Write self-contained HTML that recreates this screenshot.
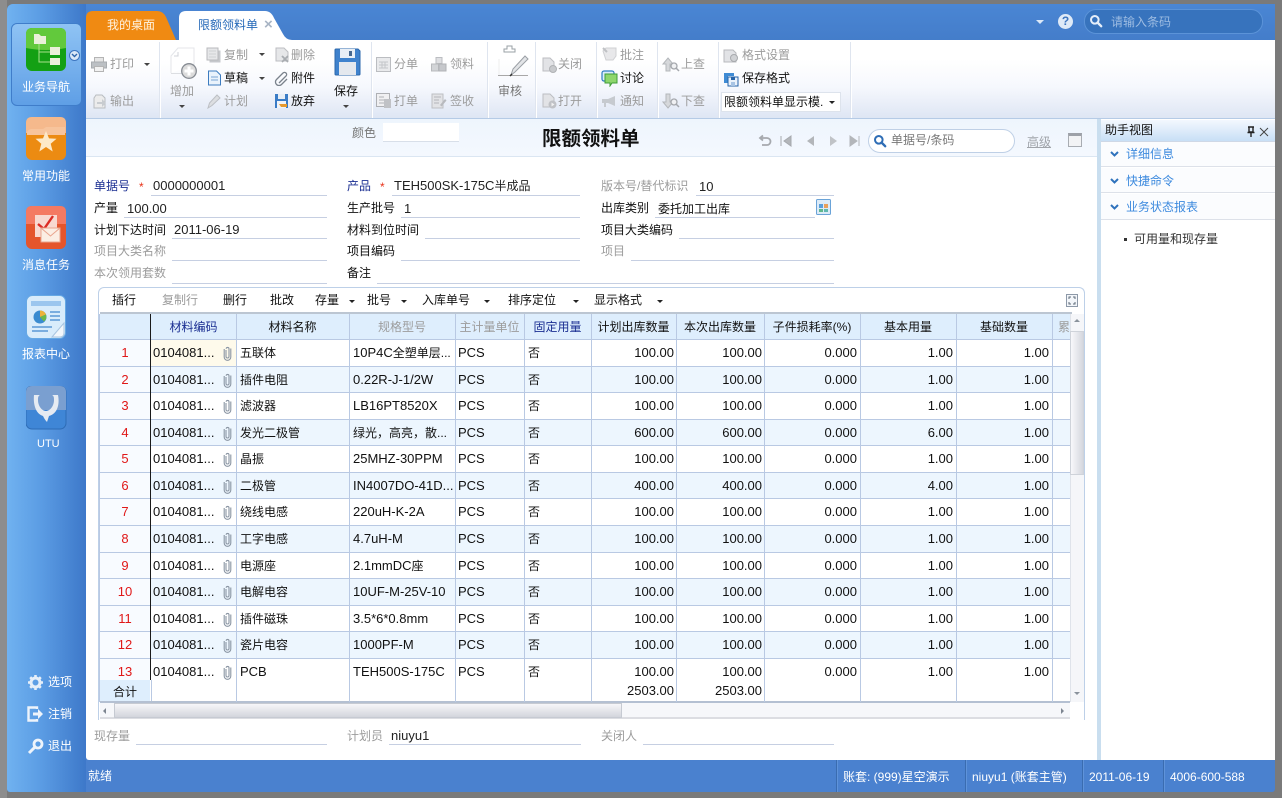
<!DOCTYPE html>
<html lang="zh-CN"><head><meta charset="utf-8"><title>限额领料单</title>
<style>
html,body{margin:0;padding:0;background:#fff}
body{width:1282px;height:799px;overflow:hidden;position:relative;font:12px/14px "Liberation Sans","WenQuanYi Zen Hei","Noto Sans CJK SC",sans-serif;color:#222}
div,span,svg,a{position:absolute}
.t{white-space:nowrap;margin-top:1px}
.n{font-size:13px}
span.i{position:static;font-size:13px}
.g{color:#9c9c9c}.w{color:#fff}.b{color:#1b2f92}.k{color:#111}
.sep{width:1px;top:42px;height:76px;background:#dfe5ef;box-shadow:1px 0 #fff}
.ar{width:0;height:0;border-left:3px solid transparent;border-right:3px solid transparent;border-top:3px solid #444}
.ln{height:1px;background:#c6cfe2}
.v{width:1px;top:314px;height:388px;background:#b9c9e3}
.h{top:314px;height:26px;line-height:27px;text-align:center;white-space:nowrap;overflow:hidden}
.r{left:100px;width:970px;border-top:1px solid #b9c9e3;height:26px;line-height:26px;color:#111}
.r.e{background:#edf6fe}
.r span{white-space:nowrap;top:0}
.r .s{left:0;width:50px;text-align:center;color:#e01818;font-size:13px;background:#f8fbff;height:100%}
.r .c{left:53px;font-size:13px}.r .e1{left:140px}.r .f{left:253px}.r .u{left:358px}.r .x{left:428px}
.r .q1,.r .q2,.r .q3,.r .q4,.r .q5{text-align:right;font-size:13px;width:90px}
.r .q1{left:484px}.r .q2{left:572px}.r .q3{left:667px}.r .q4{left:763px}.r .q5{left:859px}
.r svg{left:123px;top:5px}
</style></head><body>
<svg width="0" height="0" style="position:absolute"><defs>
<symbol id="clip" viewBox="0 0 9 16"><path d="M3 5v6.500a1.500 1.500 0 0 0 3 0V3.800a1.400 1.400 0 0 0-2.800 0M1.200 4v8a3.300 3.300 0 0 0 6.600 0V3.500" fill="none" stroke="#8a95a3" stroke-width="1.100"/></symbol>
<symbol id="doc" viewBox="0 0 16 16"><path d="M2 2h8l4 4v8H2z" fill="#e3e5e8" stroke="#b4b8bd"/><path d="M4 6h6M4 9h8M4 12h8" stroke="#c0c4c9"/></symbol>
<symbol id="mag" viewBox="0 0 14 14"><circle cx="5.800" cy="5.800" r="3.800" fill="none" stroke="#2e6db5" stroke-width="2"/><path d="M8.600 8.600l3.600 3.600" stroke="#2e6db5" stroke-width="2.400" stroke-linecap="round"/></symbol>
</defs></svg>

<!-- window frame -->
<div style="left:0;top:0;width:1282px;height:798px;background:#7a7a7a"></div>
<div style="left:0;top:0;width:7px;height:798px;background:#8d8d8d"></div>
<div style="left:7px;top:4px;width:1268px;height:788px;background:#4a81cf;border-radius:6px 6px 3px 3px"></div>
<div style="left:7px;top:4px;width:79px;height:788px;background:linear-gradient(90deg,#70b2f0,#5a9be3 45%,#3d78c9);border-radius:6px 0 0 3px"></div>
<div style="left:86px;top:4px;width:1189px;height:36px;background:linear-gradient(#4a86d4,#447dca)"></div>

<!-- tabs -->
<svg style="left:86px;top:11px" width="206" height="30"><path d="M0 29V7Q0 0 7 0h64q6 0 9 6l10 23z" fill="#f08a12"/><path d="M93 29V7q0-7 7-7h79q6 0 9 7l9 16q3 6 9 6z" fill="#fff"/></svg>
<div class="t" style="left:107px;top:17px;color:#fff3df">我的桌面</div>
<div class="t" style="left:198px;top:17px;color:#2468b8">限额领料单</div>
<div class="t" style="left:264px;top:17px;color:#a8b4c4;font-weight:bold;font-size:15px">×</div>

<!-- top right -->
<div class="ar" style="left:1036px;top:20px;border-left-width:4px;border-right-width:4px;border-top:4px solid #dce9f8"></div>
<div style="left:1058px;top:14px;width:15px;height:15px;border-radius:50%;background:#dfeaf7;color:#3d75bf;font-weight:bold;text-align:center;line-height:15px;font-size:12px">?</div>
<div style="left:1084px;top:9px;width:177px;height:23px;border-radius:12px;background:#3773bd;border:1px solid #5b93d8"></div>
<svg style="left:1089px;top:14px" width="14" height="14" viewBox="0 0 14 14"><circle cx="5.800" cy="5.800" r="3.800" fill="none" stroke="#e5eef9" stroke-width="2"/><path d="M8.600 8.600l3.600 3.600" stroke="#e5eef9" stroke-width="2.400" stroke-linecap="round"/></svg>
<div class="t" style="left:1111px;top:14px;color:#9dbce2">请输入条码</div>

<!-- sidebar -->
<div style="left:11px;top:23px;width:69px;height:81px;border-radius:6px;background:linear-gradient(#8fc3f4,#5f9fe6);border:1px solid #3f7dca"></div>
<svg style="left:26px;top:28px" width="41" height="43" viewBox="0 0 41 43"><rect width="40" height="43" rx="6" fill="#14a014"/><path d="M0 6q0-6 6-6h28q6 0 6 6v14q-20 4-40 0z" fill="#62c93c"/><path d="M13 16v18h11M13 24h11" fill="none" stroke="#a9e08c"/><path d="M8 6h5l2 2h5v8H8zM24 19h10v8H24zM24 30h10v7H24z" fill="#eaf0da"/></svg>
<div style="left:69px;top:50px;width:11px;height:11px;border-radius:50%;background:#dbe8f7;border:1px solid #3d75bf;box-sizing:border-box"></div>
<svg style="left:71px;top:53px" width="7" height="5"><path d="M1 1l2.500 2.500L6 1" fill="none" stroke="#2e65ab" stroke-width="1.400"/></svg>
<div class="t w" style="left:22px;top:79px">业务导航</div>

<svg style="left:26px;top:117px" width="41" height="43" viewBox="0 0 41 43"><rect width="40" height="43" rx="6" fill="#ec8b12"/><path d="M0 16V6q0-6 6-6h28q6 0 6 6v10z" fill="#f5b98c"/><path d="M1 16q0-3 4-4h12l3-2h19v8H1z" fill="#f7c49c"/><path d="M20 14l3 7.400 7.500.4-5.800 5 2 7.700L20 30l-6.700 4.500 2-7.700-5.800-5 7.500-.4z" fill="#fde9c8"/></svg>
<div class="t w" style="left:22px;top:168px">常用功能</div>
<svg style="left:26px;top:206px" width="41" height="43" viewBox="0 0 41 43"><rect width="40" height="43" rx="6" fill="#e4552c"/><path d="M0 6q0-6 6-6h28q6 0 6 6v12H0z" fill="#f47a62"/><rect x="9" y="9" width="22" height="22" fill="#f8d9d0"/><path d="M12 18l6 5 9-13" fill="none" stroke="#dc2c24" stroke-width="2.400"/><rect x="15" y="22" width="19" height="14" fill="#fbeee4" stroke="#e9a58e"/><path d="M15 22l9.500 8 9.500-8" fill="none" stroke="#e9a58e"/></svg>
<div class="t w" style="left:22px;top:257px">消息任务</div>
<svg style="left:26px;top:295px" width="41" height="44" viewBox="0 0 41 44"><rect x=".5" y=".5" width="39" height="43" rx="6" fill="#d9ecfb" stroke="#67a9e4"/><rect x="5" y="6" width="30" height="5" fill="#9cc6ee"/><circle cx="14" cy="22" r="6.500" fill="#3a8bd0"/><path d="M14 22V15.500a6.500 6.500 0 0 1 6 4z" fill="#ecb23a"/><path d="M14 22l6-2.500a6.500 6.500 0 0 1-2 7z" fill="#6cb84a"/><path d="M24 17h10M24 21h10M24 25h10M6 32h20M6 36h16" stroke="#5a98d6" stroke-width="1.500"/><path d="M26 42l12-14v10q0 4-4 4z" fill="#f3f7fb" stroke="#a9c5e0"/></svg>
<div class="t w" style="left:22px;top:346px">报表中心</div>
<svg style="left:26px;top:386px" width="41" height="44" viewBox="0 0 41 44"><rect width="40" height="43" rx="6" fill="#3f86d6" stroke="#2e6cb5"/><path d="M0 6q0-6 6-6h28q6 0 6 6v18H0z" fill="#7a9fd0"/><path d="M8 9h6c-2 1-2 3-2 5 0 6 4 11 8 11s8-5 8-11c0-2 0-4-2-5h6c2 10-1 19-9 21l-2 6c-2-2-3-4-4-6-7-2-10-11-9-21z" fill="#e6ebf2"/></svg>
<div class="t w" style="left:37px;top:436px;font-size:11px">UTU</div>

<svg style="left:27px;top:674px" width="17" height="17" viewBox="0 0 17 17"><circle cx="8.500" cy="8.500" r="4.500" fill="none" stroke="#e6eff9" stroke-width="3"/><path d="M8.500 1v3M8.500 13v3M1 8.500h3M13 8.500h3M3.200 3.200l2 2M11.800 11.800l2 2M13.800 3.200l-2 2M5.200 11.800l-2 2" stroke="#e6eff9" stroke-width="2.600"/></svg>
<div class="t w" style="left:48px;top:674px">选项</div>
<svg style="left:27px;top:706px" width="17" height="16" viewBox="0 0 17 16"><path d="M10 3V1.500H1.500v13H10V13" fill="none" stroke="#eef4fb" stroke-width="2.400"/><path d="M6 6.500h5V3l5 5-5 5V9.500H6z" fill="#eef4fb"/></svg>
<div class="t w" style="left:48px;top:706px">注销</div>
<svg style="left:27px;top:738px" width="17" height="17" viewBox="0 0 17 17"><circle cx="11" cy="6" r="4" fill="none" stroke="#eef4fb" stroke-width="2.800"/><path d="M8 9l-6 6" stroke="#eef4fb" stroke-width="3"/></svg>
<div class="t w" style="left:48px;top:738px">退出</div>

<!-- main surface -->
<div style="left:86px;top:40px;width:1189px;height:720px;background:#fff;border-radius:0 0 0 3px"></div>
<div style="left:86px;top:40px;width:1189px;height:79px;background:linear-gradient(#fff 25%,#f6f8fd 60%,#dee6f4);border-bottom:1px solid #b5cbe6;box-sizing:border-box"></div>
<div style="left:86px;top:119px;width:1012px;height:38px;background:linear-gradient(#eef5fd,#f4f8fe);border-bottom:1px solid #dbe6f2;box-sizing:border-box"></div>

<!-- toolbar separators -->
<div class="sep" style="left:159px"></div><div class="sep" style="left:371px"></div><div class="sep" style="left:487px"></div><div class="sep" style="left:535px"></div><div class="sep" style="left:596px"></div><div class="sep" style="left:657px"></div><div class="sep" style="left:718px"></div><div class="sep" style="left:850px"></div>

<!-- toolbar -->
<svg style="left:91px;top:57px" width="16" height="15" viewBox="0 0 16 15"><rect x="3.500" y=".5" width="9" height="5" fill="#e6e6e6" stroke="#b4b4b4"/><rect x=".5" y="5" width="15" height="6" fill="#bcc0c4" stroke="#a8acb0"/><rect x="3.500" y="9.500" width="9" height="5" fill="#f2f2f2" stroke="#b4b4b4"/></svg>
<div class="t g" style="left:110px;top:56px">打印</div><div class="ar" style="left:144px;top:63px"></div>
<svg style="left:92px;top:94px" width="16" height="15" viewBox="0 0 16 15"><path d="M4 1h6l3 3v10H2V4z" fill="#ececec" stroke="#b8bcc0"/><path d="M5 8h5V5l4 4-4 4v-3H5z" fill="#c8ccd0"/></svg><div class="t g" style="left:110px;top:93px">输出</div>

<svg style="left:170px;top:47px" width="28" height="32" viewBox="0 0 28 32"><path d="M1 26V9l7-8h16v17" fill="#fff" stroke="#e4e6ea"/><path d="M1 26.500h16" stroke="#dcdee2"/><path d="M4 9h4V5" fill="none" stroke="#d0d3d8"/><circle cx="19" cy="24" r="7.300" fill="#dcdcdc" stroke="#878c93" stroke-width="1.300"/><path d="M19 19.500v9M14.500 24h9" stroke="#fff" stroke-width="3"/></svg>
<div class="t g" style="left:170px;top:83px">增加</div><div class="ar" style="left:179px;top:105px"></div>

<svg style="left:206px;top:47px" width="16" height="16" viewBox="0 0 16 16"><rect x="3.500" y="3.500" width="11" height="12" fill="#c6c8cc"/><rect x="1" y="1" width="11" height="12" fill="#e6e7e9" stroke="#b8babd"/><path d="M3 4h7M3 7h7M3 10h7" stroke="#cfd1d4"/></svg><div class="t g" style="left:224px;top:47px">复制</div><div class="ar" style="left:259px;top:53px"></div>
<svg style="left:207px;top:70px" width="15" height="16" viewBox="0 0 15 16"><path d="M1.500 1h8l4 4v10h-12z" fill="#eaf3fc" stroke="#3d7cc0"/><path d="M4 7h7M4 10h7" stroke="#7aa6d4"/></svg><div class="t k" style="left:224px;top:70px">草稿</div><div class="ar" style="left:259px;top:77px"></div>
<svg style="left:206px;top:93px" width="16" height="16" viewBox="0 0 16 16"><path d="M2 15l1.500-5L11 2l3 3-8 7.500z" fill="#dcdee1" stroke="#bcbfc4"/></svg><div class="t g" style="left:224px;top:93px">计划</div>

<svg style="left:274px;top:47px" width="16" height="16" viewBox="0 0 16 16"><path d="M2 1h8l4 4v9H2z" fill="#e6e7e9" stroke="#bcbec2"/><path d="M8 9l6 6M14 9l-6 6" stroke="#a8acb0" stroke-width="1.800"/></svg><div class="t g" style="left:291px;top:47px">删除</div>
<svg style="left:274px;top:70px" width="15" height="16" viewBox="0 0 15 16"><path d="M5 13L12 6a2 2 0 0 0-3-3L2.500 9.500a3.500 3.500 0 0 0 5 5L13 9" fill="none" stroke="#7a828c" stroke-width="1.300"/></svg><div class="t k" style="left:291px;top:70px">附件</div>
<svg style="left:274px;top:93px" width="15" height="16" viewBox="0 0 15 16"><rect x="1" y="1" width="13" height="14" fill="#3a7cc6"/><rect x="4" y="1" width="7" height="5" fill="#e7eef6"/><rect x="3" y="8" width="9" height="7" fill="#f1f4f8"/><path d="M5 11h8v3H7z" fill="#e79a2e"/></svg><div class="t k" style="left:291px;top:93px">放弃</div>

<svg style="left:334px;top:48px" width="27" height="28" viewBox="0 0 27 28"><path d="M1 2q0-1 1-1h22l2 2v23q0 1-1 1H2q-1 0-1-1z" fill="#3f82cd" stroke="#2d68ac"/><rect x="6" y="1" width="15" height="9" fill="#e9eff6"/><rect x="15" y="3" width="3" height="5" fill="#47688f"/><rect x="5" y="14" width="17" height="13" fill="#e4e8ee"/></svg>
<div class="t k" style="left:334px;top:83px">保存</div><div class="ar" style="left:343px;top:105px"></div>

<svg style="left:376px;top:57px" width="15" height="15" viewBox="0 0 15 15"><rect x=".5" y=".5" width="14" height="14" fill="#e9eaec" stroke="#bbbdc1"/><path d="M3 5h9M3 8h9M3 11h9M6 5v6M9 5v6" stroke="#c4c6ca"/></svg><div class="t g" style="left:394px;top:56px">分单</div>
<svg style="left:376px;top:93px" width="16" height="16" viewBox="0 0 16 16"><rect x=".5" y=".5" width="13" height="13" fill="#f0f0f2" stroke="#aeb0b4"/><path d="M3 4h5M3 7h5M3 10h5" stroke="#b0b2b6"/><rect x="8" y="6" width="7" height="9" fill="#c0c2c6"/></svg><div class="t g" style="left:394px;top:93px">打单</div>
<svg style="left:431px;top:57px" width="16" height="15" viewBox="0 0 16 15"><rect x="5" y=".5" width="6" height="6" fill="#dfe0e3" stroke="#bbbdc1"/><rect x=".5" y="7" width="7" height="7" fill="#d2d4d7" stroke="#b8babd"/><rect x="8" y="7" width="7" height="7" fill="#c6c8cc" stroke="#b0b2b6"/></svg><div class="t g" style="left:450px;top:56px">领料</div>
<svg style="left:431px;top:93px" width="16" height="16" viewBox="0 0 16 16"><rect x="1" y="1" width="11" height="14" fill="#e2e3e6" stroke="#bdbfc3"/><path d="M3 4h7M3 7h5M3 10h5" stroke="#b4b6ba"/><path d="M9 12l5-6 1.500 1.500-5 6z" fill="#b8babe"/></svg><div class="t g" style="left:450px;top:93px">签收</div>

<svg style="left:498px;top:44px" width="33" height="35" viewBox="0 0 33 35"><path d="M6 8V5h3V2h5v3h3v3z" fill="none" stroke="#9aa0a6"/><path d="M0 31.500h30" stroke="#a8a8a8"/><path d="M1 31V15" stroke="#eee"/><path d="M13 31l2-6 12-13 3 3-13 13z" fill="#e2e4e7" stroke="#9a9fa5"/><path d="M12 32l2-2" stroke="#333" stroke-width="1.500"/></svg>
<div class="t" style="left:498px;top:83px;color:#777">审核</div>

<svg style="left:541px;top:57px" width="16" height="16" viewBox="0 0 16 16"><path d="M2 1h7l4 4v9H2z" fill="#e2e3e6" stroke="#bcbec2"/><circle cx="12" cy="12" r="3.500" fill="#c8cacd" stroke="#b0b2b5"/></svg><div class="t g" style="left:558px;top:56px">关闭</div>
<svg style="left:541px;top:93px" width="16" height="16" viewBox="0 0 16 16"><path d="M2 1h7l4 4v9H2z" fill="#e2e3e6" stroke="#bcbec2"/><circle cx="11.500" cy="11.500" r="4" fill="#c0c2c6"/><path d="M10.500 9.500l3 2-3 2z" fill="#f2f2f2"/></svg><div class="t g" style="left:558px;top:93px">打开</div>

<svg style="left:602px;top:47px" width="15" height="15" viewBox="0 0 15 15"><path d="M1 4l3-3h10v8l-3 4H4z" fill="#e8e8ea" stroke="#cfd0d3"/><path d="M1 1l4 4" stroke="#bfc1c4" stroke-width="2"/></svg><div class="t g" style="left:620px;top:47px">批注</div>
<svg style="left:601px;top:70px" width="17" height="17" viewBox="0 0 17 17"><rect x="1" y="1" width="12" height="10" rx="2" fill="#d9ecfa" stroke="#2f7cc0" stroke-width="1.200"/><path d="M4 4h12v9h-5l-2 3v-3H4z" fill="#8ed66c" stroke="#3f9c38"/></svg><div class="t k" style="left:620px;top:70px">讨论</div>
<svg style="left:601px;top:94px" width="16" height="15" viewBox="0 0 16 15"><path d="M1 5h6l7-3v10L7 9H5v4H3V9H1z" fill="#c6cacf"/></svg><div class="t g" style="left:620px;top:93px">通知</div>

<svg style="left:662px;top:57px" width="18" height="16" viewBox="0 0 18 16"><path d="M6 1l5 6H8v7H4V7H1z" fill="#d6d8db" stroke="#b4b7bb"/><circle cx="12" cy="9" r="3" fill="#f0f1f3" stroke="#a4a7ac" stroke-width="1.300"/><path d="M14 11l3 3" stroke="#a4a7ac" stroke-width="1.500"/></svg><div class="t g" style="left:681px;top:56px">上查</div>
<svg style="left:662px;top:93px" width="18" height="16" viewBox="0 0 18 16"><path d="M6 15l5-6H8V1H4v8H1z" fill="#d6d8db" stroke="#b4b7bb"/><circle cx="12" cy="9" r="3" fill="#f0f1f3" stroke="#a4a7ac" stroke-width="1.300"/><path d="M14 11l3 3" stroke="#a4a7ac" stroke-width="1.500"/></svg><div class="t g" style="left:681px;top:93px">下查</div>

<svg style="left:723px;top:47px" width="16" height="16" viewBox="0 0 16 16"><path d="M1 3h9l3 3v9H1z" fill="#e2e3e6" stroke="#b8babd"/><circle cx="11" cy="11" r="3.500" fill="#d0d2d5" stroke="#a8aaae"/></svg><div class="t g" style="left:742px;top:47px">格式设置</div>
<svg style="left:723px;top:70px" width="16" height="17" viewBox="0 0 16 17"><path d="M1 3h10v3H5v7H1z" fill="#3f8bd4"/><rect x="5" y="7" width="10" height="9" fill="#eaf2fb" stroke="#2563a8"/><rect x="8" y="7" width="4" height="3" fill="#2563a8"/><rect x="8" y="12" width="4" height="4" fill="#a8c4e4"/></svg><div class="t k" style="left:742px;top:70px">保存格式</div>
<div style="left:721px;top:92px;width:120px;height:20px;background:#fff;border:1px solid #dde3ec;box-sizing:border-box"></div>
<div class="t k" style="left:724px;top:94px">限额领料单显示模.</div><div class="ar" style="left:829px;top:101px;border-top-color:#222"></div>

<!-- doc header -->
<div class="t" style="left:352px;top:125px;color:#777">颜色</div>
<div style="left:383px;top:123px;width:76px;height:18px;background:#fff;border-bottom:1px solid #d8dfe9"></div>
<div class="t" style="left:542px;top:127px;font-size:19.500px;line-height:22px;font-weight:bold;color:#111">限额领料单</div>
<svg style="left:758px;top:134px" width="108" height="14" viewBox="0 0 108 14"><path d="M3 4h6a3.500 3.500 0 0 1 0 7H4M5 1.500L2 4l3 2.500" fill="none" stroke="#a6a9ae" stroke-width="1.800"/><path d="M23 2v10M33 2l-7 5 7 5z" fill="#b3b6ba" stroke="#a6a9ae"/><path d="M56 2l-7 5 7 5z" fill="#b3b6ba"/><path d="M72 2l7 5-7 5z" fill="#c0c3c7"/><path d="M92 2l7 5-7 5zM101 2v10" fill="#b3b6ba" stroke="#b3b6ba"/></svg>
<div style="left:868px;top:129px;width:145px;height:22px;border-radius:12px;background:#fff;border:1px solid #bfd0e6"></div>
<svg style="left:873px;top:134px" width="14" height="14"><use href="#mag"/></svg>
<div class="t" style="left:891px;top:132px;color:#777">单据号/条码</div>
<div class="t" style="left:1027px;top:134px;color:#a0a4aa;text-decoration:underline">高级</div>
<div style="left:1068px;top:133px;width:14px;height:14px;background:#f2f3f5;border:1px solid #a8acb2;border-top:3px solid #9da1a8;box-sizing:border-box"></div>

<!-- form -->
<div class="t b" style="left:94px;top:178px">单据号</div><div class="t" style="left:139px;top:179px;color:#e8331a">*</div><div class="t n" style="left:153px;top:178px">0000000001</div><div class="ln" style="left:151px;top:195px;width:176px"></div>
<div class="t k" style="left:94px;top:200px">产量</div><div class="t n" style="left:127px;top:201px">100.00</div><div class="ln" style="left:124px;top:217px;width:203px"></div>
<div class="t k" style="left:94px;top:222px">计划下达时间</div><div class="t n" style="left:174px;top:222px">2011-06-19</div><div class="ln" style="left:172px;top:238px;width:155px"></div>
<div class="t g" style="left:94px;top:243px">项目大类名称</div><div class="ln" style="left:172px;top:260px;width:155px"></div>
<div class="t g" style="left:94px;top:265px">本次领用套数</div><div class="ln" style="left:172px;top:283px;width:155px"></div>

<div class="t b" style="left:347px;top:178px">产品</div><div class="t" style="left:380px;top:179px;color:#e8331a">*</div><div class="t" style="left:394px;top:178px"><span class="i">TEH500SK-175C</span>半成品</div><div class="ln" style="left:392px;top:195px;width:188px"></div>
<div class="t k" style="left:347px;top:200px">生产批号</div><div class="t n" style="left:404px;top:201px">1</div><div class="ln" style="left:401px;top:217px;width:179px"></div>
<div class="t k" style="left:347px;top:222px">材料到位时间</div><div class="ln" style="left:425px;top:238px;width:155px"></div>
<div class="t k" style="left:347px;top:243px">项目编码</div><div class="ln" style="left:401px;top:260px;width:179px"></div>
<div class="t k" style="left:347px;top:265px">备注</div><div class="ln" style="left:377px;top:283px;width:457px"></div>

<div class="t g" style="left:601px;top:178px">版本号/替代标识</div><div class="t n" style="left:699px;top:179px">10</div><div class="ln" style="left:696px;top:195px;width:138px"></div>
<div class="t k" style="left:601px;top:200px">出库类别</div><div class="t k" style="left:658px;top:201px">委托加工出库</div><div class="ln" style="left:655px;top:217px;width:160px"></div>
<svg style="left:816px;top:199px" width="15" height="16" viewBox="0 0 15 16"><rect x=".5" y=".5" width="14" height="15" rx="1" fill="#dcebf8" stroke="#6aa3d8"/><rect x="3" y="5" width="4" height="4" fill="#5a9fdc"/><rect x="8" y="5" width="4" height="4" fill="#e8a05c"/><rect x="3" y="10" width="4" height="3" fill="#5fb88c"/><rect x="8" y="10" width="4" height="3" fill="#5fb8b0"/></svg>
<div class="t k" style="left:601px;top:222px">项目大类编码</div><div class="ln" style="left:679px;top:238px;width:155px"></div>
<div class="t g" style="left:601px;top:243px">项目</div><div class="ln" style="left:631px;top:260px;width:203px"></div>

<!-- grid frame -->
<div style="left:98px;top:287px;width:987px;height:433px;border:1px solid #bdd0e8;border-bottom:0;border-radius:6px 6px 0 0;box-sizing:border-box"></div>
<div style="left:100px;top:312px;width:972px;height:2px;background:#bcc6d2"></div>
<div class="t k" style="left:112px;top:292px">插行</div><div class="t g" style="left:162px;top:292px">复制行</div><div class="t k" style="left:223px;top:292px">删行</div><div class="t k" style="left:270px;top:292px">批改</div><div class="t k" style="left:315px;top:292px">存量</div><div class="ar" style="left:349px;top:300px;border-top-color:#222"></div><div class="t k" style="left:367px;top:292px">批号</div><div class="ar" style="left:401px;top:300px;border-top-color:#222"></div><div class="t k" style="left:422px;top:292px">入库单号</div><div class="ar" style="left:484px;top:300px;border-top-color:#222"></div><div class="t k" style="left:508px;top:292px">排序定位</div><div class="ar" style="left:573px;top:300px;border-top-color:#222"></div><div class="t k" style="left:594px;top:292px">显示格式</div><div class="ar" style="left:657px;top:300px;border-top-color:#222"></div>
<svg style="left:1066px;top:294px" width="12" height="13" viewBox="0 0 12 13"><rect x=".5" y=".5" width="11" height="12" fill="#f3f6fa" stroke="#8d99a8"/><path d="M3 5V3h2M7 3h2v2M9 8v2H7M5 10H3V8" fill="none" stroke="#5d6a78"/></svg>

<!-- grid header -->
<div style="left:100px;top:314px;width:970px;height:26px;background:#deeefd;border-bottom:1px solid #b9c9e3;box-sizing:border-box"></div>
<div class="h b" style="left:151px;width:85px">材料编码</div><div class="h k" style="left:236px;width:113px">材料名称</div><div class="h g" style="left:349px;width:106px">规格型号</div><div class="h g" style="left:455px;width:69px">主计量单位</div><div class="h b" style="left:524px;width:67px">固定用量</div><div class="h k" style="left:591px;width:85px">计划出库数量</div><div class="h k" style="left:676px;width:88px">本次出库数量</div><div class="h k" style="left:764px;width:96px">子件损耗率(%)</div><div class="h k" style="left:860px;width:96px">基本用量</div><div class="h k" style="left:956px;width:96px">基础数量</div><div class="h g" style="left:1052px;width:18px;text-align:left;padding-left:6px;box-sizing:border-box">累</div>

<!-- grid rows -->
<div class="r" style="top:339px"><span class="s">1</span><span style="left:51px;width:85px;height:26px;background:#fefaeb"></span><span class="c">0104081...</span><svg width="9" height="16"><use href="#clip"/></svg><span class="e1">五联体</span><span class="f"><span class="i" style="position:static">10P4C</span>全塑单层...</span><span class="u n">PCS</span><span class="x">否</span><span class="q1">100.00</span><span class="q2">100.00</span><span class="q3">0.000</span><span class="q4">1.00</span><span class="q5">1.00</span></div>
<div class="r e" style="top:366px"><span class="s">2</span><span class="c">0104081...</span><svg width="9" height="16"><use href="#clip"/></svg><span class="e1">插件电阻</span><span class="f n">0.22R-J-1/2W</span><span class="u n">PCS</span><span class="x">否</span><span class="q1">100.00</span><span class="q2">100.00</span><span class="q3">0.000</span><span class="q4">1.00</span><span class="q5">1.00</span></div>
<div class="r" style="top:392px"><span class="s">3</span><span class="c">0104081...</span><svg width="9" height="16"><use href="#clip"/></svg><span class="e1">滤波器</span><span class="f n">LB16PT8520X</span><span class="u n">PCS</span><span class="x">否</span><span class="q1">100.00</span><span class="q2">100.00</span><span class="q3">0.000</span><span class="q4">1.00</span><span class="q5">1.00</span></div>
<div class="r e" style="top:419px"><span class="s">4</span><span class="c">0104081...</span><svg width="9" height="16"><use href="#clip"/></svg><span class="e1">发光二极管</span><span class="f">绿光，高亮，散...</span><span class="u n">PCS</span><span class="x">否</span><span class="q1">600.00</span><span class="q2">600.00</span><span class="q3">0.000</span><span class="q4">6.00</span><span class="q5">1.00</span></div>
<div class="r" style="top:445px"><span class="s">5</span><span class="c">0104081...</span><svg width="9" height="16"><use href="#clip"/></svg><span class="e1">晶振</span><span class="f n">25MHZ-30PPM</span><span class="u n">PCS</span><span class="x">否</span><span class="q1">100.00</span><span class="q2">100.00</span><span class="q3">0.000</span><span class="q4">1.00</span><span class="q5">1.00</span></div>
<div class="r e" style="top:472px"><span class="s">6</span><span class="c">0104081...</span><svg width="9" height="16"><use href="#clip"/></svg><span class="e1">二极管</span><span class="f n">IN4007DO-41D...</span><span class="u n">PCS</span><span class="x">否</span><span class="q1">400.00</span><span class="q2">400.00</span><span class="q3">0.000</span><span class="q4">4.00</span><span class="q5">1.00</span></div>
<div class="r" style="top:498px"><span class="s">7</span><span class="c">0104081...</span><svg width="9" height="16"><use href="#clip"/></svg><span class="e1">绕线电感</span><span class="f n">220uH-K-2A</span><span class="u n">PCS</span><span class="x">否</span><span class="q1">100.00</span><span class="q2">100.00</span><span class="q3">0.000</span><span class="q4">1.00</span><span class="q5">1.00</span></div>
<div class="r e" style="top:525px"><span class="s">8</span><span class="c">0104081...</span><svg width="9" height="16"><use href="#clip"/></svg><span class="e1">工字电感</span><span class="f n">4.7uH-M</span><span class="u n">PCS</span><span class="x">否</span><span class="q1">100.00</span><span class="q2">100.00</span><span class="q3">0.000</span><span class="q4">1.00</span><span class="q5">1.00</span></div>
<div class="r" style="top:552px"><span class="s">9</span><span class="c">0104081...</span><svg width="9" height="16"><use href="#clip"/></svg><span class="e1">电源座</span><span class="f"><span class="i" style="position:static">2.1mmDC</span>座</span><span class="u n">PCS</span><span class="x">否</span><span class="q1">100.00</span><span class="q2">100.00</span><span class="q3">0.000</span><span class="q4">1.00</span><span class="q5">1.00</span></div>
<div class="r e" style="top:578px"><span class="s">10</span><span class="c">0104081...</span><svg width="9" height="16"><use href="#clip"/></svg><span class="e1">电解电容</span><span class="f n">10UF-M-25V-10</span><span class="u n">PCS</span><span class="x">否</span><span class="q1">100.00</span><span class="q2">100.00</span><span class="q3">0.000</span><span class="q4">1.00</span><span class="q5">1.00</span></div>
<div class="r" style="top:605px"><span class="s">11</span><span class="c">0104081...</span><svg width="9" height="16"><use href="#clip"/></svg><span class="e1">插件磁珠</span><span class="f n">3.5*6*0.8mm</span><span class="u n">PCS</span><span class="x">否</span><span class="q1">100.00</span><span class="q2">100.00</span><span class="q3">0.000</span><span class="q4">1.00</span><span class="q5">1.00</span></div>
<div class="r e" style="top:631px"><span class="s">12</span><span class="c">0104081...</span><svg width="9" height="16"><use href="#clip"/></svg><span class="e1">瓷片电容</span><span class="f n">1000PF-M</span><span class="u n">PCS</span><span class="x">否</span><span class="q1">100.00</span><span class="q2">100.00</span><span class="q3">0.000</span><span class="q4">1.00</span><span class="q5">1.00</span></div>
<div class="r" style="top:658px;height:42px;background:#fff;border-bottom:2px solid #b4c0d2"><span class="s" style="height:21px;line-height:26px;overflow:hidden">13</span><span class="c">0104081...</span><svg width="9" height="16"><use href="#clip"/></svg><span class="e1 n">PCB</span><span class="f n">TEH500S-175C</span><span class="u n">PCS</span><span class="x">否</span><span class="q1">100.00</span><span class="q2">100.00</span><span class="q3">0.000</span><span class="q4">1.00</span><span class="q5">1.00</span></div>
<div style="left:100px;top:680px;width:50px;height:21px;background:#deeefd;text-align:center;line-height:24px;color:#111">合计</div>
<div class="t n" style="left:627px;top:683px;color:#111">2503.00</div><div class="t n" style="left:715px;top:683px;color:#111">2503.00</div>

<!-- grid column lines -->
<div class="v" style="left:99px"></div><div class="v" style="left:236px"></div><div class="v" style="left:349px"></div><div class="v" style="left:455px"></div><div class="v" style="left:524px"></div><div class="v" style="left:591px"></div><div class="v" style="left:676px"></div><div class="v" style="left:764px"></div><div class="v" style="left:860px"></div><div class="v" style="left:956px"></div><div class="v" style="left:1052px"></div>
<div style="left:150px;top:314px;width:1px;height:366px;background:#1a1a1a"></div>
<div style="left:151px;top:680px;width:1px;height:21px;background:#b9c9e3"></div>

<!-- scrollbars -->
<div style="left:1070px;top:314px;width:14px;height:388px;background:#f5f6f9;border-left:1px solid #dfe3ea;box-sizing:border-box"></div>
<div style="left:1070px;top:331px;width:14px;height:144px;background:linear-gradient(90deg,#f8f8fb,#d5d7de);border:1px solid #cfd3da;box-sizing:border-box"></div>
<div style="left:1074px;top:319px;width:0;height:0;border-left:3px solid transparent;border-right:3px solid transparent;border-bottom:3px solid #8a929c"></div>
<div class="ar" style="left:1074px;top:692px;border-top-color:#8a929c"></div>
<div style="left:100px;top:703px;width:970px;height:16px;background:#f6f7fa;border-bottom:2px solid #dcdde2;box-sizing:border-box"></div>
<div style="left:114px;top:703px;width:508px;height:15px;background:linear-gradient(#f6f6f9,#d3d5dc);border:1px solid #c6cad2;box-sizing:border-box"></div>
<div style="left:103px;top:708px;width:0;height:0;border-top:3px solid transparent;border-bottom:3px solid transparent;border-right:3px solid #7d8590"></div>
<div style="left:1061px;top:708px;width:0;height:0;border-top:3px solid transparent;border-bottom:3px solid transparent;border-left:3px solid #7d8590"></div>

<!-- form footer -->
<div class="t g" style="left:94px;top:728px">现存量</div><div class="ln" style="left:136px;top:744px;width:191px"></div>
<div class="t g" style="left:347px;top:728px">计划员</div><div class="t n" style="left:391px;top:728px">niuyu1</div><div class="ln" style="left:389px;top:744px;width:192px"></div>
<div class="t g" style="left:601px;top:728px">关闭人</div><div class="ln" style="left:643px;top:744px;width:191px"></div>

<!-- helper panel -->
<div style="left:1097px;top:119px;width:4px;height:641px;background:#c9deef"></div>
<div style="left:1101px;top:120px;width:174px;height:22px;background:linear-gradient(#f3f8fe,#c8dff6);border-bottom:1px solid #cfd8e6;box-sizing:border-box"></div>
<div class="t" style="left:1105px;top:122px;color:#111">助手视图</div>
<svg style="left:1246px;top:126px" width="24" height="12" viewBox="0 0 24 12"><path d="M2 1h6M3 1v5h4V1M1.500 6.500h7M5 6.500V11" fill="none" stroke="#222" stroke-width="1.400"/><path d="M14 2l8 8M22 2l-8 8" stroke="#444"/></svg>
<div style="left:1101px;top:142px;width:174px;height:25px;background:#fbfcfe;border-bottom:1px solid #dde1e9;box-sizing:border-box"></div>
<div style="left:1101px;top:168px;width:174px;height:25px;background:#fbfcfe;border-bottom:1px solid #dde1e9;box-sizing:border-box"></div>
<div style="left:1101px;top:194px;width:174px;height:26px;background:#fbfcfe;border-bottom:1px solid #dde1e9;box-sizing:border-box"></div>
<svg style="left:1110px;top:151px" width="9" height="6"><path d="M1 1l3.500 3.500L8 1" fill="none" stroke="#2f72bc" stroke-width="2"/></svg><div class="t" style="left:1126px;top:146px;color:#3d8ade">详细信息</div>
<svg style="left:1110px;top:178px" width="9" height="6"><path d="M1 1l3.500 3.500L8 1" fill="none" stroke="#2f72bc" stroke-width="2"/></svg><div class="t" style="left:1126px;top:173px;color:#3d8ade">快捷命令</div>
<svg style="left:1110px;top:204px" width="9" height="6"><path d="M1 1l3.500 3.500L8 1" fill="none" stroke="#2f72bc" stroke-width="2"/></svg><div class="t" style="left:1126px;top:199px;color:#3d8ade">业务状态报表</div>
<div style="left:1124px;top:238px;width:3px;height:3px;background:#333"></div>
<div class="t" style="left:1134px;top:231px;color:#333">可用量和现存量</div>

<!-- status bar -->
<div class="t w" style="left:88px;top:768px">就绪</div>
<div style="left:836px;top:760px;width:1px;height:32px;background:#3a6cb0;box-shadow:1px 0 #5f93da"></div>
<div style="left:965px;top:760px;width:1px;height:32px;background:#3a6cb0;box-shadow:1px 0 #5f93da"></div>
<div style="left:1082px;top:760px;width:1px;height:32px;background:#3a6cb0;box-shadow:1px 0 #5f93da"></div>
<div style="left:1163px;top:760px;width:1px;height:32px;background:#3a6cb0;box-shadow:1px 0 #5f93da"></div>
<div class="t w" style="left:843px;top:769px">账套: (999)星空演示</div>
<div class="t w" style="left:972px;top:769px">niuyu1 (账套主管)</div>
<div class="t w" style="left:1089px;top:769px">2011-06-19</div>
<div class="t w" style="left:1170px;top:769px">4006-600-588</div>
</body></html>
